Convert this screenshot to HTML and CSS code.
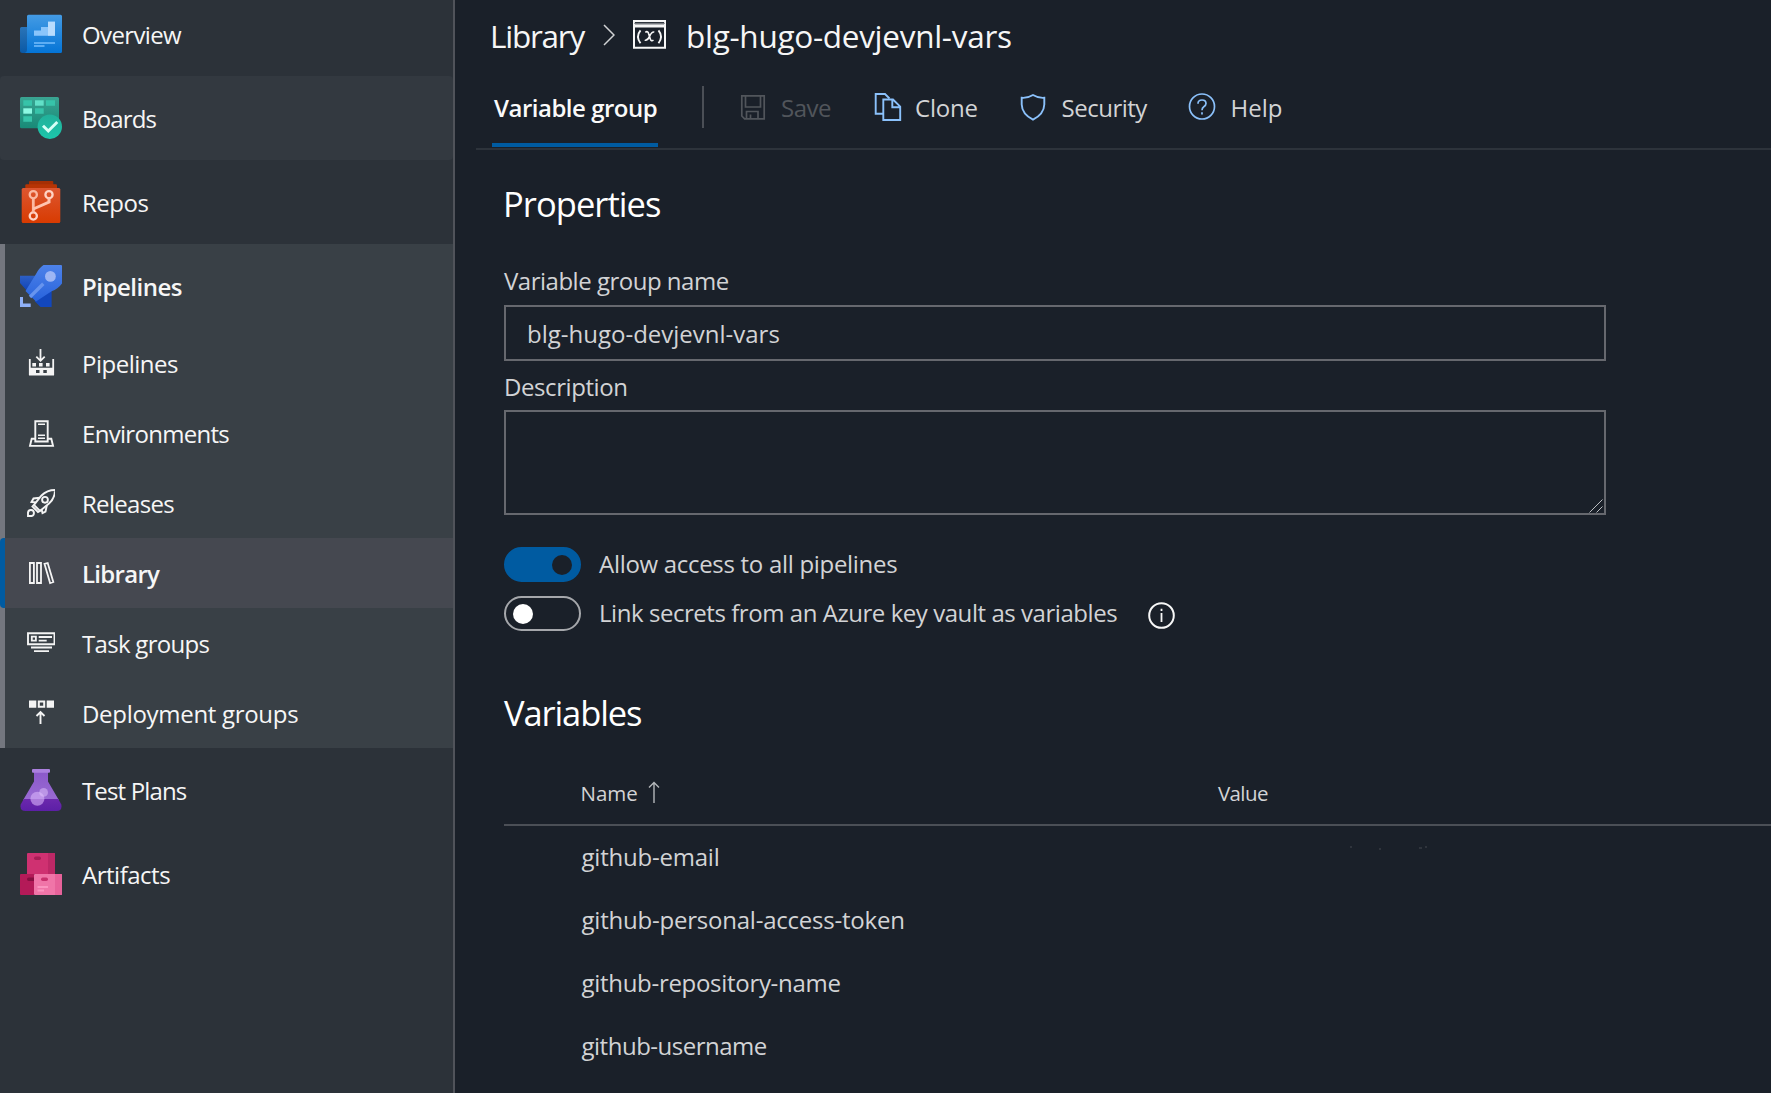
FILE: index.html
```html
<!DOCTYPE html>
<html lang="en">
<head>
<meta charset="utf-8">
<title>blg-hugo-devjevnl-vars - Library</title>
<link rel="stylesheet" href="styles.css">
</head>
<body>
<div class="app">
  <nav class="sidebar">
    <a class="hub first">
      <svg class="hub-icon" viewBox="0 0 42 42">
        <defs>
          <linearGradient id="ov" x1="0" y1="0" x2="0" y2="1"><stop offset="0" stop-color="#449be4"/><stop offset="1" stop-color="#0474d6"/></linearGradient>
          <linearGradient id="ob" x1="0" y1="0" x2="0" y2="1"><stop offset="0" stop-color="#2a74b8"/><stop offset="1" stop-color="#0a59a6"/></linearGradient>
        </defs>
        <path d="M1.5 14H9V40H2.5A2.5 2.5 0 0 1 0 37.5V15.500A1.500 1.500 0 0 1 1.500 14Z" fill="url(#ob)"/>
        <path d="M8.500 1.700H40.500A1.500 1.500 0 0 1 42 3.200V38.500A1.500 1.500 0 0 1 40.500 40H4.500Q7 39.500 7 36.500V3.200A1.500 1.500 0 0 1 8.500 1.700Z" fill="url(#ov)"/>
        <path d="M14 22.700V17.500H21V14H28V8.700H35V22.700Z" fill="#8ac5fb"/>
        <path d="M28 8.700H35V22.700H28Z" fill="#b9dcfd"/>
        <path d="M14 29H35V31H14ZM14 32H24.500V34H14Z" fill="#5cadf4"/>
      </svg>
      <span class="t6">Overview</span>
    </a>
    <a class="hub hover">
      <svg class="hub-icon" viewBox="0 0 42 42">
        <defs>
          <linearGradient id="bo" x1="0" y1="0" x2="0" y2="1"><stop offset="0" stop-color="#3aa492"/><stop offset="1" stop-color="#188a77"/></linearGradient>
          <linearGradient id="bc" x1="0" y1="0" x2="0" y2="1"><stop offset="0" stop-color="#22b09a"/><stop offset="1" stop-color="#1cc6ab"/></linearGradient>
        </defs>
        <rect width="39" height="31.300" rx="1.500" fill="url(#bo)"/>
        <g fill="#37c3a9"><path d="M3.300 3.300H12V8.700H3.300ZM26 3.300H35V8.700H26ZM15 11.300H23.700V16.700H15ZM3.300 19.300H12V24.700H3.300Z"/></g>
        <path d="M15 3.300H23.700V8.700H15Z" fill="#62e0c8"/>
        <path d="M3.300 11.300H12V16.700H3.300Z" fill="#8df8e2"/>
        <circle cx="29.800" cy="29.700" r="12.200" fill="url(#bc)"/>
        <path d="M23 28.700L28.300 34L37.300 25" fill="none" stroke="#d6fff6" stroke-width="2.900"/>
      </svg>
      <span class="t8">Boards</span>
    </a>
    <a class="hub">
      <svg class="hub-icon" viewBox="0 0 42 42">
        <defs><linearGradient id="re" x1="0" y1="0" x2="0" y2="1"><stop offset="0" stop-color="#dd5630"/><stop offset="1" stop-color="#d83b01"/></linearGradient></defs>
        <path d="M10 0H32.300Q33.300 0 33.300 1V4H9V1Q9 0 10 0Z" fill="#a52f04"/>
        <path d="M6.500 3.300H35.800Q37 3.300 37 4.500V8H5.300V4.500Q5.300 3.300 6.500 3.300Z" fill="#b73404"/>
        <rect x="1.700" y="7" width="38.600" height="35" rx="1.500" fill="url(#re)"/>
        <g fill="none" stroke="#fbb9a2" stroke-width="2.300"><circle cx="13.300" cy="13.700" r="3.600"/><circle cx="29" cy="13.700" r="3.600" stroke="#ffd3c4"/><circle cx="13.300" cy="35" r="3.600" stroke="#ffd3c4"/><path d="M13.300 17.300V31.400" stroke-width="2.800"/><path d="M29 17.300V21L13.300 28" stroke-width="3" stroke="#ffc4b0"/></g>
      </svg>
      <span class="t5">Repos</span>
    </a>
    <div class="group">
      <a class="hub strong">
        <svg class="hub-icon" viewBox="0 0 42 42">
          <defs>
            <linearGradient id="pr" x1="0" y1="0" x2="0" y2="1"><stop offset="0" stop-color="#4d82e9"/><stop offset="1" stop-color="#2863dc"/></linearGradient>
            <linearGradient id="pf" x1="0" y1="0" x2="0" y2="1"><stop offset="0" stop-color="#2d5fc4"/><stop offset="1" stop-color="#1044b9"/></linearGradient>
          </defs>
          <path d="M0 10.700H17L6.700 25.500L0 18Z" fill="url(#pf)"/>
          <path d="M31.600 24V42H20.500L14.500 36Z" fill="#1247bd"/>
          <path d="M23.500 0H41Q42 0 42 1V18.500Q38 24 31.600 26.300L16 36.500L5.500 26L16 9Q19 3 23.500 0Z" fill="url(#pr)"/>
          <circle cx="30.400" cy="11.400" r="5.400" fill="#9db6f4"/>
          <path d="M10 32L23.300 18.700" stroke="#6794ee" stroke-width="3.400"/>
          <path d="M0 32H3V38.500H10.700V42H0Z" fill="#8fb0f7"/>
        </svg>
        <span class="t5">Pipelines</span>
      </a>
      <a class="sub">
        <svg class="sub-icon" viewBox="0 0 28 28" fill="none" stroke="#f4f4f4" stroke-width="1.800">
          <path d="M13.500 0V12M9.300 7.600L13.500 11.800L17.700 7.600"/>
          <path d="M2.800 10V26M26.200 10V26"/>
          <path d="M2 18.700H27V26.500H2ZM9 21V24H12.500V21ZM16.300 21V24H19.800V21Z" fill="#f4f4f4" fill-rule="evenodd" stroke="none"/>
          <path d="M5.300 14H9V17.500H5.300ZM12 14H15.600V17.500H12ZM19 14H22.600V17.500H19Z" fill="#f4f4f4" stroke="none"/>
        </svg>
        <span class="t5">Pipelines</span>
      </a>
      <a class="sub">
        <svg class="sub-icon" viewBox="0 0 28 28" fill="none" stroke="#f4f4f4" stroke-width="1.900">
          <path d="M8.300 22.500V2.300H20.700V22.500Z"/>
          <path d="M8.300 19.800H4.700L3 26.900H26L24.300 19.800H20.700"/>
          <path d="M11 5.200H18M11 16.200H18M11 19.300H18" stroke-width="1.500"/>
        </svg>
        <span class="t7">Environments</span>
      </a>
      <a class="sub">
        <svg class="sub-icon" viewBox="0 0 28 28" fill="none" stroke="#f4f4f4" stroke-width="1.900">
          <path d="M28 1Q20 1 14.500 6.500L7 16L13 22L22 14.500Q28 9 28 1Z"/>
          <circle cx="18" cy="10.800" r="2.900"/>
          <path d="M13 8.700L6.500 9.500L4.500 13L9 13.500M19.800 16.500L18.500 22.500L15.500 24L14.500 20"/>
          <path d="M7 16L5.500 17.500L11 23L13 22"/>
          <path d="M1 27V23.500A3 3 0 1 1 4.500 27Z"/>
        </svg>
        <span class="t7">Releases</span>
      </a>
      <a class="sub selected">
        <svg class="sub-icon" viewBox="0 0 28 28" fill="none" stroke="#f4f4f4" stroke-width="1.800">
          <path d="M2.900 4H6.900V24H2.900ZM10 4H14V24H10ZM17.500 4.900L20.700 4L26.300 23L23.100 24Z"/>
        </svg>
        <span class="t7">Library</span>
      </a>
      <a class="sub">
        <svg class="sub-icon" viewBox="0 0 28 28" fill="none" stroke="#f4f4f4" stroke-width="1.900">
          <path d="M1 4.300H27.500V15.200H1Z"/>
          <path d="M4.800 7.700H8.900V11.700H4.800Z" stroke-width="1.800"/>
          <path d="M11.700 8H25M11.700 11.700H19.700M4 18.500H25M7 22.200H22" stroke-width="1.800"/>
        </svg>
        <span class="t7">Task groups</span>
      </a>
      <a class="sub">
        <svg class="sub-icon" viewBox="0 0 28 28" fill="none" stroke="#f4f4f4" stroke-width="1.900">
          <path d="M2 1.500H9.300V8.700H2ZM19.700 1.500H27V8.700H19.700Z" fill="#f4f4f4" stroke="none"/>
          <path d="M11.800 2.500H17.200V7.700H11.800Z" stroke-width="2"/>
          <path d="M13.500 25V13M9.500 17L13.500 13L17.500 17"/>
        </svg>
        <span class="t3">Deployment groups</span>
      </a>
    </div>
    <a class="hub">
      <svg class="hub-icon" viewBox="0 0 42 42">
        <defs>
          <linearGradient id="te" x1="0" y1="0" x2="0" y2="1"><stop offset="0" stop-color="#8b59c9"/><stop offset="1" stop-color="#9a6bd4"/></linearGradient>
          <linearGradient id="tl" x1="0" y1="0" x2="0" y2="1"><stop offset="0" stop-color="#6b28ad"/><stop offset="1" stop-color="#5c1fa6"/></linearGradient>
        </defs>
        <path d="M14 3H28V12.500L38.800 31H3.200L14 12.500Z" fill="url(#te)"/>
        <path d="M3.700 30H38.300L41.300 35.500Q42.500 42 36.500 42H5.500Q-.500 42 .700 35.500Z" fill="url(#tl)"/>
        <rect x="12" width="18" height="3.700" rx="1" fill="#ab80de"/>
        <circle cx="17.400" cy="29.800" r="7" fill="#d9b4fa" opacity=".6"/>
        <circle cx="23.600" cy="23.400" r="4.400" fill="#e2c6fc" opacity=".5"/>
      </svg>
      <span class="t8">Test Plans</span>
    </a>
    <a class="hub">
      <svg class="hub-icon" viewBox="0 0 42 42">
        <path d="M8 0H34Q35 0 35 1V21H7V1Q7 0 8 0Z" fill="#cf3171"/>
        <path d="M28 0H34Q35 0 35 1V21H28Z" fill="#bd2866"/>
        <path d="M1 21H14V42H1Q0 42 0 41V22Q0 21 1 21Z" fill="#b41a58"/>
        <path d="M15 21H41Q42 21 42 22V41Q42 42 41 42H15Q14 42 14 41V22Q14 21 15 21Z" fill="#f075a8"/>
        <path d="M35 21H41Q42 21 42 22V41Q42 42 41 42H35Z" fill="#e7629a"/>
        <rect x="14" y="3.500" width="7" height="3.500" rx="1.700" fill="#a81d55"/>
        <path d="M8.700 24.500H14V28H8.700A1.750 1.750 0 0 1 8.700 24.500Z" fill="#860f41"/>
        <rect x="21" y="24.500" width="7" height="3.500" rx="1.700" fill="#c9306d"/>
        <path d="M17.500 33H28V35H17.500ZM17.500 36.500H24V38.500H17.500Z" fill="#fb94bf"/>
      </svg>
      <span class="t5">Artifacts</span>
    </a>
  </nav>

  <main class="main">
    <header class="breadcrumb">
      <span class="crumb-root">Library</span>
      <svg class="chevron" viewBox="0 0 12 22"><path d="M1 1L11 11L1 21" fill="none" stroke="#d0d2d4" stroke-width="1.500"/></svg>
      <svg class="group-icon" viewBox="0 0 33 29">
        <path d="M1 1H32V27.700H1Z" fill="none" stroke="#f7f7f7" stroke-width="2"/>
        <path d="M1 5.900H32" stroke="#f7f7f7" stroke-width="3.200"/>
        <path d="M1 3.300H32" stroke="#8b8f94" stroke-width="1"/>
        <path d="M7.500 10.300Q2.500 16.500 7.500 23.200M25.500 10.300Q30.500 16.500 25.500 23.200" fill="none" stroke="#f7f7f7" stroke-width="1.900"/>
        <path d="M12.300 12.300Q14.800 10.500 15.600 13.500L17.300 19Q18.200 21.700 20.500 20.200M21.300 12Q18.500 11.500 16.700 16.200Q14.500 21 11.700 20.200" fill="none" stroke="#f7f7f7" stroke-width="1.600"/>
      </svg>
      <span class="crumb-name">blg-hugo-devjevnl-vars</span>
    </header>

    <div class="toolbar">
      <div class="tab t5">Variable group</div>
      <i class="separator"></i>
      <div class="command disabled">
        <svg class="cmd-icon" viewBox="0 0 28 28" fill="none" stroke="#51555b" stroke-width="1.700">
          <path d="M2.800 2.800H25.200V25.800H5.600L2.800 23ZM6.500 2.800V14H21.500V2.800M7.500 25.800V18.500H19V25.800M11.500 25.800V21.500"/>
        </svg>
        <span class="t5">Save</span>
      </div>
      <div class="command">
        <svg class="cmd-icon" viewBox="0 0 28 28" fill="none" stroke="#8bc1fb" stroke-width="1.900">
          <path d="M9.300 20.700H1.700V1H11L15.500 5.500"/>
          <path d="M9.300 6.500H19L26.200 13.700V27H9.300ZM18.300 6.500V14.300H26.200"/>
        </svg>
        <span class="t2">Clone</span>
      </div>
      <div class="command wide">
        <svg class="cmd-icon" viewBox="0 0 28 28" fill="none" stroke="#8bc1fb" stroke-width="1.900">
          <path d="M14 2Q8.500 5.300 2.700 4.800V11.500Q3 21 14 26.700Q25 21 25.300 11.500V4.800Q19.500 5.300 14 2Z"/>
        </svg>
        <span class="t5">Security</span>
      </div>
      <div class="command wide help">
        <svg class="cmd-icon" viewBox="0 0 28 28" fill="none" stroke="#8bc1fb" stroke-width="1.700">
          <circle cx="14" cy="13.500" r="12.500"/>
          <path d="M10 10.700Q10 7 14 7Q18 7 18 10.500Q18 12.300 15.800 13.800Q14 15 14 17.200M14 19.200V21.500"/>
        </svg>
        <span>Help</span>
      </div>
    </div>

    <section class="content">
      <h2 class="t9">Properties</h2>
      <label class="field-label t5">Variable group name</label>
      <div class="text-input">blg-hugo-devjevnl-vars</div>
      <label class="field-label t4">Description</label>
      <div class="text-area">
        <svg class="grip" viewBox="0 0 14 14"><path d="M.500 13.500L13.500 .500M7.500 13.500L13.500 7.500" stroke="#b9bcc0" stroke-width="1"/></svg>
      </div>
      <div class="toggle-row">
        <span class="toggle on"><i class="knob"></i></span>
        <span class="t3">Allow access to all pipelines</span>
      </div>
      <div class="toggle-row">
        <span class="toggle"><i class="knob"></i></span>
        <span class="long">Link secrets from an Azure key vault as variables</span>
        <svg class="info" viewBox="0 0 27 27"><circle cx="13.500" cy="13.500" r="12.300" fill="none" stroke="#f7f7f7" stroke-width="2"/><path d="M13.500 11V20M13.500 6.800V9" stroke="#f7f7f7" stroke-width="1.800"/></svg>
      </div>
      <h2 class="variables-title">Variables</h2>
      <div class="table">
        <div class="row head">
          <div class="cell">Name
            <svg class="sort" viewBox="0 0 12 22"><path d="M6 22V1.500M1 6.500L6 1.500L11 6.500" fill="none" stroke="#b4b7ba" stroke-width="1.400"/></svg>
          </div>
          <div class="cell value t6">Value</div>
        </div>
        <div class="row">
          <div class="cell t2">github-email</div>
          <div class="cell"><svg class="redacted" viewBox="0 0 80 6" fill="#2f343c"><path d="M0 1H2V3H0ZM29 3H31V5H29ZM69 2H72V4H69ZM75 1H77V3H75Z"/></svg></div>
        </div>
        <div class="row"><div class="cell t2">github-personal-access-token</div></div>
        <div class="row"><div class="cell t3">github-repository-name</div></div>
        <div class="row"><div class="cell t5">github-username</div></div>
      </div>
    </section>
  </main>
</div>
</body>
</html>
```
FILE: styles.css
```css
* { box-sizing: border-box; }

body {
  margin: 0;
  background: #1a2029;
  color: #d2d3d5;
  font: 400 24px/32px "Open Sans", "Noto Sans", sans-serif;
}

svg { display: block; flex: none; }

/* letter tightening */
.t2 { letter-spacing: -0.22px; }
.t3 { letter-spacing: -0.3px; }
.t4 { letter-spacing: -0.42px; }
.t5 { letter-spacing: -0.49px; }
.t6 { letter-spacing: -0.62px; }
.t7 { letter-spacing: -0.7px; }
.t8 { letter-spacing: -0.85px; }
.t9 { letter-spacing: -0.95px; }

.app {
  display: flex;
  height: 1093px;
  overflow: hidden;
}

/* sidebar */
.sidebar {
  flex: none;
  width: 455px;
  background: #2c3239;
  border-right: 2px solid #50535a;
  color: #f6f6f6;
}

.hub, .sub {
  display: flex;
  align-items: center;
  white-space: nowrap;
}

.hub {
  height: 84px;
  padding-left: 20px;
  gap: 20px;
}

.hub span, .sub span { padding-top: 1px; }
.hub.first { margin-top: -8px; }
.hub.hover { background: #333940; border-radius: 4px; }
.hub-icon { width: 42px; height: 42px; }
.strong, .selected { font-weight: 600; }

.group {
  background: linear-gradient(90deg, #74777f 5px, #394046 5px);
}

.sub {
  height: 70px;
  padding-left: 27px;
  gap: 27px;
}

.sub span { padding-top: 2px; }
.sub-icon { width: 28px; height: 28px; }

.sub.selected {
  border-left: 5px solid #005ba1;
  border-radius: 4px 0 0 4px;
  padding-left: 22px;
  background: #454850;
}

/* header */
.main { flex: 1; min-width: 0; }

.breadcrumb {
  display: flex;
  align-items: center;
  height: 71px;
  padding-left: 35px;
  font-size: 31.5px;
  color: #f6f6f6;
  white-space: nowrap;
}

.crumb-root { width: 113px; letter-spacing: -1.25px; }
.chevron { width: 12px; height: 22px; margin: 0 18px 2px 0; }
.group-icon { width: 33px; height: 29px; margin: 0 20px 2px 0; }
.crumb-name { letter-spacing: -0.28px; }

.toolbar {
  display: grid;
  grid-template-columns: 166px 81px 135px 145px 168px auto;
  align-items: center;
  height: 79px;
  margin-left: 21px;
  padding-left: 16px;
  border-bottom: 2px solid #2d333b;
}

.tab {
  align-self: end;
  height: 55px;
  margin-bottom: 1px;
  padding: 0 0 0 2px;
  border-bottom: 4px solid #005ba1;
  color: #fafafa;
  font-weight: 600;
  white-space: nowrap;
}

.separator {
  width: 2px;
  height: 42px;
  margin: -5px 0 0 44px;
  background: #4b4f56;
}

.command {
  display: flex;
  align-items: center;
  gap: 13px;
  margin-top: -6px;
}

.command span { padding-top: 2px; }
.command.disabled { color: #51555b; gap: 14px; }
.command.wide { gap: 14.5px; }
.command.help { margin-left: 1px; }
.cmd-icon { width: 28px; height: 28px; }

/* form */
.content { padding-left: 49px; }

h2 {
  margin: 0;
  font-size: 34.5px;
  font-weight: 400;
  line-height: 48px;
  color: #fff;
}

.content > h2:first-child { padding: 30px 0 37px 0; margin-left: -1px; }

.field-label {
  display: block;
  height: 40px;
}

.text-input {
  width: 1102px;
  height: 56px;
  padding: 11px 21px;
  border: 2px solid #66686e;
}

.text-input + .field-label {
  height: 49px;
  padding-top: 10px;
}

.text-area {
  display: flex;
  align-items: flex-end;
  justify-content: flex-end;
  width: 1102px;
  height: 105px;
  margin-bottom: 32px;
  padding-right: 1px;
  border: 2px solid #66686e;
}

.grip { width: 14px; height: 14px; }

.toggle-row {
  display: flex;
  align-items: center;
  height: 35px;
  margin-bottom: 14px;
  white-space: nowrap;
}

.toggle-row span + span { margin: -1px 0 0 18px; }
.long { width: 519px; letter-spacing: -0.45px; }

.toggle {
  display: flex;
  align-items: center;
  width: 77px;
  height: 35px;
  padding: 0 7px;
  border: 2px solid #a5a7ab;
  border-radius: 18px;
}

.toggle.on {
  justify-content: flex-end;
  border-color: #005ba1;
  background: #005ba1;
}

.knob {
  width: 20px;
  height: 20px;
  border-radius: 50%;
  background: #fff;
}

.on .knob { background: #1a2029; }
.info { width: 27px; height: 27px; margin: 3px 0 0 30px; }

.variables-title { padding-top: 44px; letter-spacing: -1.11px; }

/* table */
.table { padding-top: 21px; }

.row {
  display: grid;
  grid-template-columns: 637px 1fr;
  align-items: center;
  height: 63px;
  padding-left: 77px;
}

.row.head {
  height: 68px;
  margin-bottom: -1px;
  padding-top: 3px;
  border-bottom: 2px solid #4b4f56;
  font-size: 20.5px;
}

.head .cell {
  display: flex;
  align-items: center;
  gap: 10px;
}

.cell:first-child { margin-left: 0.5px; }
.head .cell:first-child { margin-left: -0.5px; }
.sort { width: 12px; height: 22px; margin-top: -1px; }
.redacted { width: 80px; height: 6px; margin: -12px 0 0 132px; }
```
